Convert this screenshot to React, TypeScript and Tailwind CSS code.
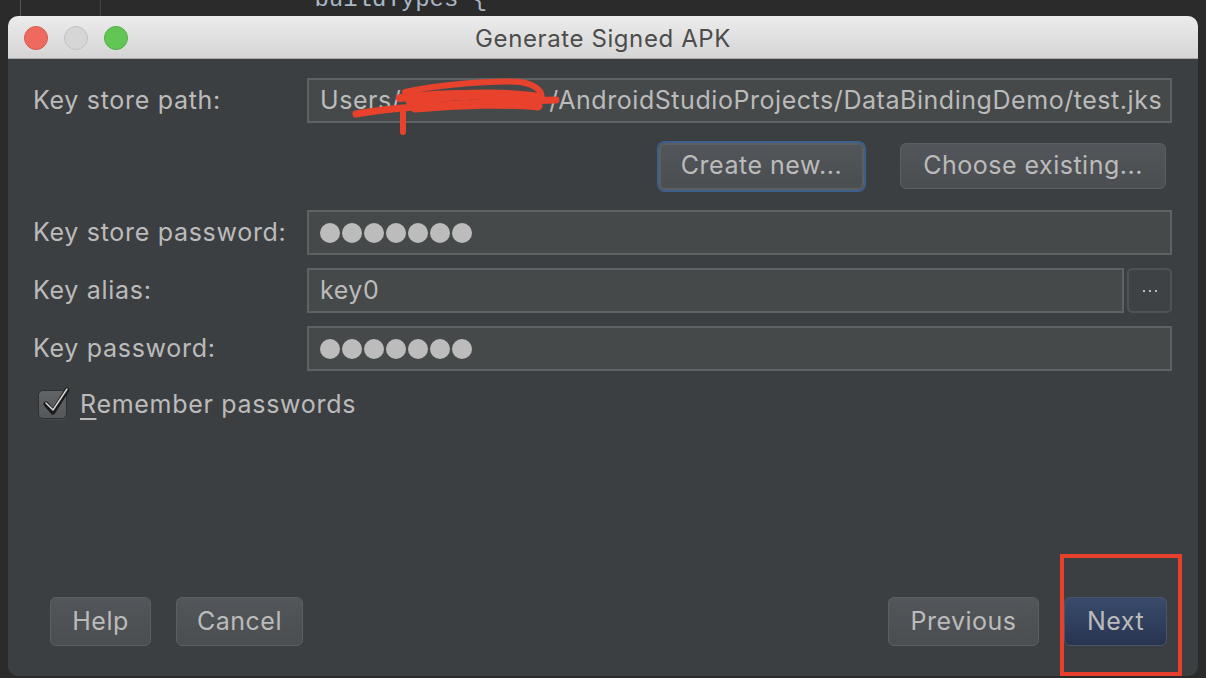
import React from 'react';

const font = { fontFamily: 'Inter, "Liberation Sans", sans-serif' };

function Field({ children, className = '' }: { children?: React.ReactNode; className?: string }) {
  return (
    <div
      className={`flex items-center h-[45px] border-2 border-[#5f6264] bg-[#45494a] pl-[11px] text-[25px] tracking-[0.55px] text-[#bbbbbb] ${className}`}
    >
      {children}
    </div>
  );
}

function Dots() {
  return (
    <div className="flex gap-[2px]">
      {Array.from({ length: 7 }).map((_, i) => (
        <span key={i} className="w-[20px] h-[20px] rounded-full bg-[#bcbcbc]" />
      ))}
    </div>
  );
}

function Btn({ children, className = '' }: { children: React.ReactNode; className?: string }) {
  return (
    <button
      className={`flex items-center justify-center rounded-[6px] border border-[#5c5f61] bg-gradient-to-b from-[#52565a] to-[#4a4e51] text-[25px] tracking-[0.5px] text-[#bbbbbb] ${className}`}
    >
      {children}
    </button>
  );
}

const label = 'text-[25px] tracking-[0.7px] text-[#bbbbbb]';

export default function App() {
  return (
    <div className="relative w-[1206px] h-[678px] overflow-hidden bg-[#2b2b2b]" style={font}>
      {/* editor peeking out above the dialog */}
      <div className="h-4 relative overflow-hidden bg-[#2b2b2b]">
        <div className="absolute left-[20px] top-0 w-[1px] h-4 bg-[#555]" />
        <div className="absolute left-[100px] top-0 w-[1px] h-4 bg-[#444]" />
        <div className="absolute left-[300px] top-[-18px] whitespace-pre text-[24px] text-[#a9b7c6] font-['Liberation_Mono',monospace]">
          {' buildTypes {'}
        </div>
      </div>

      {/* dialog */}
      <div className="mx-2 h-[660px] flex flex-col rounded-[10px] overflow-hidden bg-[#3c3f41]">
        {/* title bar */}
        <div className="relative h-[43px] flex items-center justify-center pt-[3px] bg-gradient-to-b from-[#ececec] to-[#d5d5d5] border-b border-[#a9a9a9]">
          <div className="absolute left-[16px] top-[10px] flex gap-4">
            <span className="w-6 h-6 rounded-full bg-[#ee6a5f] border border-[#d9574c]" />
            <span className="w-6 h-6 rounded-full bg-[#d6d6d6] border border-[#c2c2c2]" />
            <span className="w-6 h-6 rounded-full bg-[#62c655] border border-[#52ad45]" />
          </div>
          <span className="text-[24px] text-[#4c4c4c] tracking-[0.6px]">Generate Signed APK</span>
        </div>

        {/* body */}
        <div className="flex-1 flex flex-col pl-[25px] pr-[26px] pt-[19px] pb-[30px]">
          <div className="grid grid-cols-[274px_1fr] items-center">
            <span className={label}>Key store path:</span>
            <Field className="h-[44px]">
              <span>Users/</span>
              <span className="w-[148px]">&nbsp;</span>
              <span>/AndroidStudioProjects/DataBindingDemo/test.jks</span>
            </Field>
          </div>

          <div className="flex justify-end items-center gap-[36px] mt-[18px] mr-[6px] h-[50px]">
            <Btn className="w-[205px] h-[47px] border-2 border-[#4e77ad] ring-2 ring-[#3d5f8c]">Create new...</Btn>
            <Btn className="w-[266px] h-[46px]">Choose existing...</Btn>
          </div>

          <div className="grid grid-cols-[274px_1fr] items-center mt-[19px]">
            <span className={label}>Key store password:</span>
            <Field>
              <Dots />
            </Field>
          </div>

          <div className="flex items-center mt-[13px]">
            <span className={`${label} w-[274px]`}>Key alias:</span>
            <Field className="flex-1">key0</Field>
            <button className="w-[45px] h-[45px] ml-[3px] rounded-[5px] border-2 border-[#4f5254] bg-[#3f4244] flex items-center justify-center gap-[4px]">
              <span className="w-[2px] h-[2px] bg-[#bbbbbb]" />
              <span className="w-[2px] h-[2px] bg-[#bbbbbb]" />
              <span className="w-[2px] h-[2px] bg-[#bbbbbb]" />
            </button>
          </div>

          <div className="grid grid-cols-[274px_1fr] items-center mt-[13px]">
            <span className={label}>Key password:</span>
            <Field>
              <Dots />
            </Field>
          </div>

          <div className="flex items-center mt-[15px] ml-[5px] gap-[13px]">
            <div className="relative w-[29px] h-[29px] rounded-[5px] border border-[#2e3031] bg-gradient-to-b from-[#606467] to-[#54585b] shadow-[0_1px_0_#46494b]">
              <svg className="absolute left-[3px] top-[-5px]" width="28" height="32" viewBox="0 0 28 32">
                <path d="M4 18 L11 26 L25 4" fill="none" stroke="#1b1b1b" strokeWidth="5" strokeLinecap="round" strokeLinejoin="round" />
                <path d="M4 17 L11 24 L25 3" fill="none" stroke="#d8d8d8" strokeWidth="1.5" strokeLinecap="round" strokeLinejoin="round" />
              </svg>
            </div>
            <span className={label}>
              <span className="underline underline-offset-[5px]">R</span>emember passwords
            </span>
          </div>

          <div className="mt-auto flex items-center pl-[17px] pr-[5px]">
            <Btn className="w-[101px] h-[49px]">Help</Btn>
            <Btn className="w-[127px] h-[49px] ml-[25px]">Cancel</Btn>
            <div className="flex-1" />
            <Btn className="w-[151px] h-[49px]">Previous</Btn>
            <button className="w-[103px] h-[49px] ml-[25px] rounded-[6px] border border-[#4a5567] bg-gradient-to-b from-[#394b6c] to-[#283551] text-[25px] tracking-[0.5px] text-[#bbbbbb]">
              Next
            </button>
          </div>
        </div>
      </div>

      {/* red annotations drawn on top of the screenshot */}
      <svg className="absolute inset-0 pointer-events-none" width="1206" height="678" viewBox="0 0 1206 678">
        <g fill="none" stroke="#e8412c" strokeLinecap="round" strokeLinejoin="round">
          <path d="M356 114 C400 106 480 102 556 100" strokeWidth="7" />
          <path d="M405 92 C440 84 500 80 520 82 C535 84 545 92 540 100" strokeWidth="6" />
          <path d="M410 100 C450 95 500 92 540 98" strokeWidth="10" />
          <path d="M415 108 C460 104 510 103 538 106" strokeWidth="9" />
          <path d="M400 98 C420 96 430 94 460 94" strokeWidth="8" />
          <path d="M403 108 L403 132" strokeWidth="6" />
        </g>
        <rect x="1062" y="556" width="118" height="118" fill="none" stroke="#e8402c" strokeWidth="4" />
      </svg>
    </div>
  );
}
